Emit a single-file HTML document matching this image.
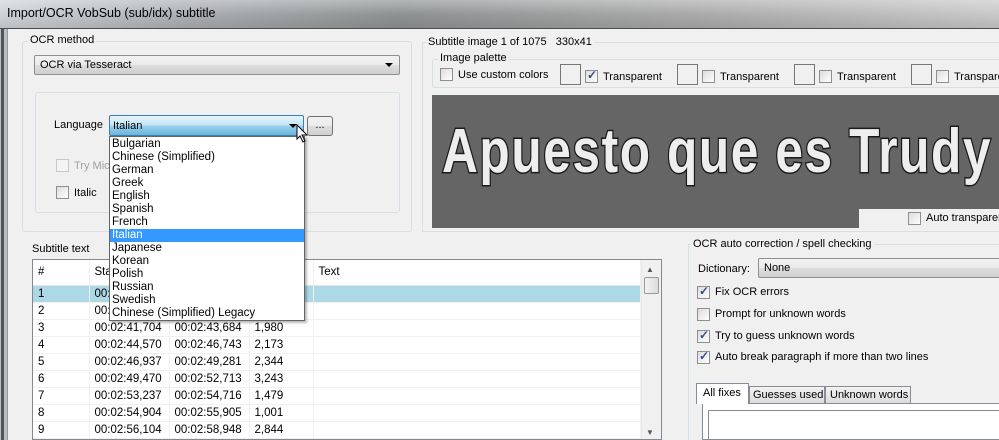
<!DOCTYPE html>
<html><head><meta charset="utf-8"><style>
*{box-sizing:border-box;margin:0;padding:0}
body{width:999px;height:440px;overflow:hidden;background:#f0f0f0;font-family:"Liberation Sans",sans-serif;font-size:11px;color:#000;position:relative}
.a{position:absolute;white-space:nowrap}
.gb{position:absolute;border:1px solid #d5dfe5;border-radius:3px}
.lbl{position:absolute;background:#f0f0f0;padding:0 2px;white-space:nowrap}
.cb{position:absolute;width:13px;height:13px;border:1px solid #8f8f8f;background:linear-gradient(135deg,#dcdcdc,#fff)}
.cb.k::after{content:"✓";position:absolute;left:1px;top:-3px;font-size:12px;color:#3a4f8a;font-weight:bold}
.combo{position:absolute;border:1px solid #8e8f8f;border-radius:2px;background:linear-gradient(#f2f2f2,#ebebeb 50%,#dddddd 51%,#cfcfcf);padding:3px 5px}
.arr{position:absolute;right:6px;top:7px;width:0;height:0;border-left:4px solid transparent;border-right:4px solid transparent;border-top:4px solid #000}
table{border-collapse:collapse}
td{height:17px;border-bottom:1px solid #f0f0f0;border-right:1px solid #f0f0f0;padding-left:5px;font-size:11.5px}
</style></head><body>
<div class="a" style="left:0;top:0;width:999px;height:29px;background:linear-gradient(90deg,#cfd3d6,#a9acaf 20%,#8e9192 40%,#aaa 70%,#c8c8c8);border-bottom:1px solid #555"></div>
<div class="a" style="left:0;top:0;width:999px;height:29px;background:linear-gradient(#ffffff55,#0000 50%,#00000018)"></div>
<div class="a" style="left:7px;top:6px;font-size:12.5px;color:#000">Import/OCR VobSub (sub/idx) subtitle</div>
<div class="a" style="left:0;top:29px;width:8px;height:411px;background:#b9bec4"></div>
<div class="a" style="left:1px;top:29px;width:3px;height:411px;background:#555"></div>
<div class="a" style="left:7px;top:29px;width:1px;height:411px;background:#999"></div>

<div class="gb" style="left:22px;top:41px;width:390px;height:191px"></div>
<div class="lbl" style="left:28px;top:34px">OCR method</div>
<div class="combo" style="left:34px;top:55px;width:366px;height:20px">OCR via Tesseract<div class="arr"></div></div>
<div class="gb" style="left:35px;top:92px;width:365px;height:121px"></div>
<div class="a" style="left:54px;top:119px">Language</div>
<div class="a" style="left:109px;top:115px;width:195px;height:21px;border:1px solid #3c7fb1;border-radius:2px;background:linear-gradient(#e5f4fc,#c4e5f6 50%,#98d1ef 51%,#6cb5db);padding:4px 3px">Italian<div class="arr" style="top:8px"></div></div>
<div class="a" style="left:307px;top:116px;width:26px;height:20px;border:1px solid #707070;border-radius:3px;background:linear-gradient(#f2f2f2,#ebebeb 50%,#dddddd 51%,#cfcfcf);text-align:center;line-height:16px">...</div>
<div class="cb" style="left:56px;top:159px;border-color:#c8c8c8;background:#f4f4f4"></div>
<div class="a" style="left:74px;top:160px;color:#a0a0a0">Try Mic</div>
<div class="cb" style="left:56px;top:186px"></div>
<div class="a" style="left:74px;top:187px">Italic</div>

<div class="a" style="left:32px;top:243px">Subtitle text</div>
<div class="a" style="left:32px;top:259px;width:630px;height:181px;border:1px solid #828790;background:#fff;overflow:hidden">
<table style="position:absolute;left:0;top:0;width:608px">
<tr style="height:25px"><td style="width:56px;height:25px;border-bottom:1px solid #e5e5e5">#</td><td style="width:80px;border-bottom:1px solid #e5e5e5">Start</td><td style="width:80px;border-bottom:1px solid #e5e5e5">End</td><td style="width:64px;border-bottom:1px solid #e5e5e5">Duration</td><td style="border-bottom:1px solid #e5e5e5">Text</td></tr>
<tr style="background:#add8e6"><td>1</td><td>00:02:37,000</td><td></td><td></td><td></td></tr>
<tr><td>2</td><td>00:02:39,000</td><td></td><td></td><td></td></tr>
<tr><td>3</td><td>00:02:41,704</td><td>00:02:43,684</td><td>1,980</td><td></td></tr>
<tr><td>4</td><td>00:02:44,570</td><td>00:02:46,743</td><td>2,173</td><td></td></tr>
<tr><td>5</td><td>00:02:46,937</td><td>00:02:49,281</td><td>2,344</td><td></td></tr>
<tr><td>6</td><td>00:02:49,470</td><td>00:02:52,713</td><td>3,243</td><td></td></tr>
<tr><td>7</td><td>00:02:53,237</td><td>00:02:54,716</td><td>1,479</td><td></td></tr>
<tr><td>8</td><td>00:02:54,904</td><td>00:02:55,905</td><td>1,001</td><td></td></tr>
<tr><td>9</td><td>00:02:56,104</td><td>00:02:58,948</td><td>2,844</td><td></td></tr>
<tr><td>10</td><td></td><td></td><td></td><td></td></tr>
</table>
<div class="a" style="left:608px;top:0;width:20px;height:180px;background:#f0f0f0;border-left:1px solid #e8e8e8"></div>
<div class="a" style="left:613px;top:5px;font-size:8px;color:#555">▲</div>
<div class="a" style="left:611px;top:17px;width:15px;height:17px;border:1px solid #999;border-radius:2px;background:linear-gradient(90deg,#f4f4f4,#dcdcdc)"></div>
<div class="a" style="left:613px;top:168px;font-size:8px;color:#555">▼</div>
</div>

<div class="a" style="left:109px;top:136px;width:196px;height:185px;background:#fff;border:1px solid #646464;box-shadow:2px 2px 2px #0004;font-size:11.5px;line-height:13px;padding-top:1px;z-index:10">
<div style="padding-left:2px">Bulgarian</div><div style="padding-left:2px">Chinese (Simplified)</div><div style="padding-left:2px">German</div><div style="padding-left:2px">Greek</div><div style="padding-left:2px">English</div><div style="padding-left:2px">Spanish</div><div style="padding-left:2px">French</div><div style="padding-left:2px;background:#3399ff;color:#fff">Italian</div><div style="padding-left:2px">Japanese</div><div style="padding-left:2px">Korean</div><div style="padding-left:2px">Polish</div><div style="padding-left:2px">Russian</div><div style="padding-left:2px">Swedish</div><div style="padding-left:2px">Chinese (Simplified) Legacy</div>
</div>
<svg class="a" style="left:296px;top:124px;z-index:11" width="14" height="20"><path d="M1 1 L1 15 L4 12 L7 18 L9 17 L6 11 L11 11 Z" fill="#fff" stroke="#000"/></svg>

<div class="a" style="left:422px;top:42px;width:577px;height:190px;border:1px solid #d5dfe5;border-right:none"></div>
<div class="lbl" style="left:426px;top:36px">Subtitle image 1 of 1075&nbsp;&nbsp; 330x41</div>
<div class="gb" style="left:432px;top:59px;width:580px;height:29px"></div>
<div class="lbl" style="left:438px;top:52px">Image palette</div>
<div class="cb" style="left:440px;top:68px"></div><div class="a" style="left:458px;top:69px">Use custom colors</div>
<div class="a" style="left:560px;top:64px;width:21px;height:21px;border:1px solid #777;background:#f0f0f0"></div>
<div class="cb k" style="left:585px;top:70px"></div><div class="a" style="left:603px;top:71px">Transparent</div>
<div class="a" style="left:677px;top:64px;width:21px;height:21px;border:1px solid #777;background:#f0f0f0"></div>
<div class="cb" style="left:702px;top:70px"></div><div class="a" style="left:720px;top:71px">Transparent</div>
<div class="a" style="left:794px;top:64px;width:21px;height:21px;border:1px solid #777;background:#f0f0f0"></div>
<div class="cb" style="left:819px;top:70px"></div><div class="a" style="left:837px;top:71px">Transparent</div>
<div class="a" style="left:911px;top:64px;width:21px;height:21px;border:1px solid #777;background:#f0f0f0"></div>
<div class="cb" style="left:936px;top:70px"></div><div class="a" style="left:954px;top:71px">Transparent</div>
<div class="a" style="left:432px;top:95px;width:567px;height:133px;background:#656565;overflow:hidden">
<div class="a" style="left:10px;top:26px;font-size:62px;line-height:1;font-weight:bold;color:#eee;letter-spacing:2px;-webkit-text-stroke:3px #1a1a1a;paint-order:stroke fill;transform:scaleX(0.8);transform-origin:0 0">Apuesto que es Trudy</div>
</div>
<div class="a" style="left:859px;top:209px;width:140px;height:19px;background:#f0f0f0"></div>
<div class="cb" style="left:908px;top:212px"></div><div class="a" style="left:926px;top:212px">Auto transparent</div>

<div class="a" style="left:688px;top:244px;width:311px;height:196px;border:1px solid #d5dfe5;border-right:none;border-bottom:none"></div>
<div class="lbl" style="left:691px;top:238px">OCR auto correction / spell checking</div>
<div class="a" style="left:698px;top:263px">Dictionary:</div>
<div class="combo" style="left:758px;top:258px;width:245px;height:20px">None</div>
<div class="cb k" style="left:697px;top:286px"></div><div class="a" style="left:715px;top:286px">Fix OCR errors</div>
<div class="cb" style="left:697px;top:308px"></div><div class="a" style="left:715px;top:308px">Prompt for unknown words</div>
<div class="cb k" style="left:697px;top:330px"></div><div class="a" style="left:715px;top:330px">Try to guess unknown words</div>
<div class="cb k" style="left:697px;top:351px"></div><div class="a" style="left:715px;top:351px">Auto break paragraph if more than two lines</div>
<div class="a" style="left:749px;top:386px;width:76px;height:18px;border:1px solid #898c95;background:linear-gradient(#f2f2f2,#dcdcdc);padding:2px 3px">Guesses used</div>
<div class="a" style="left:825px;top:386px;width:86px;height:18px;border:1px solid #898c95;background:linear-gradient(#f2f2f2,#dcdcdc);padding:2px 4px">Unknown words</div>
<div class="a" style="left:702px;top:403px;width:297px;height:37px;border:1px solid #898c95;border-right:none;background:#fff"></div>
<div class="a" style="left:696px;top:383px;width:53px;height:21px;border:1px solid #898c95;border-bottom:none;background:#fff;padding:3px 6px">All fixes</div>
<div class="a" style="left:708px;top:410px;width:291px;height:30px;border:1px solid #898c95;border-right:none;border-bottom:none"></div>
</body></html>
